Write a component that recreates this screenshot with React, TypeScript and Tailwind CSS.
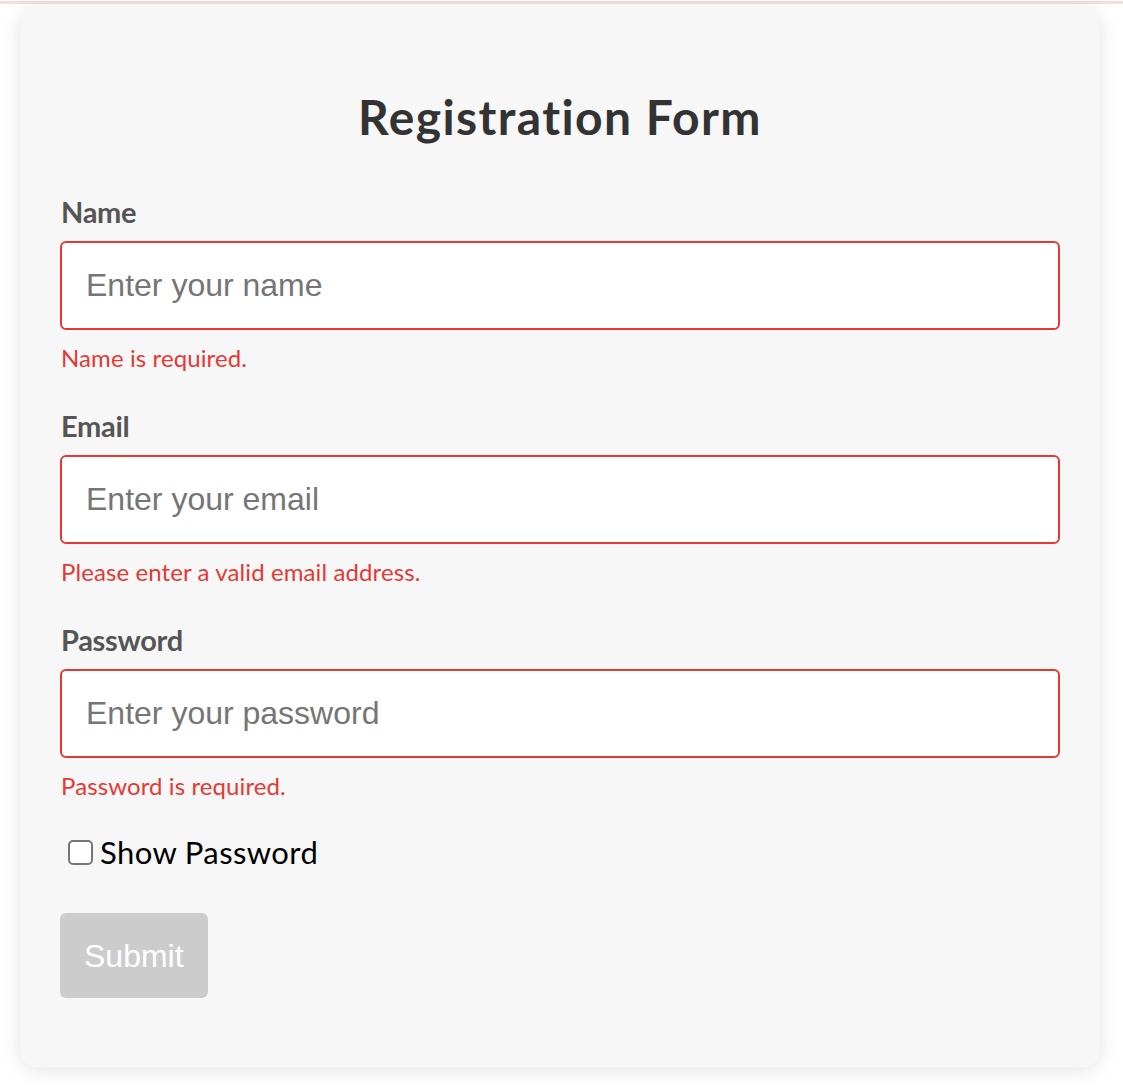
import React from "react";

const seg = { fontFamily: 'Lato, "Noto Sans", sans-serif' } as React.CSSProperties;
const arial = { fontFamily: '"Liberation Sans", Arial, sans-serif' } as React.CSSProperties;

function Field({ label, placeholder, error, type = "text", first = false }: { label: string; placeholder: string; error: string; type?: string; first?: boolean }) {
  return (
    <div className={first ? "" : "mt-[32px]"}>
      <div className="h-[40px] leading-[40px] text-[29px] font-bold tracking-[-0.3px] text-[#555555] pl-px" style={seg}>
        {label}
      </div>
      <input
        type={type}
        placeholder={placeholder}
        className="mt-[9px] block w-full h-[89px] px-[24px] text-[32px] bg-white border-2 border-[#e53935] rounded-[6px] outline-none placeholder:text-[#757575] text-[#333]"
        style={arial}
      />
      <div className="mt-[12px] h-[32px] leading-[32px] text-[24px] tracking-[0.1px] text-[#e53935] pl-px" style={seg}>
        {error}
      </div>
    </div>
  );
}

export default function App() {
  return (
    <div className="min-h-[1086px] bg-white">
      <div className="h-[1px] bg-white" />
      <div className="h-[3px] bg-[#f2dfdf]" />
      <div className="px-[20px] pt-[1px]">
        <div className="w-[1080px] bg-[#f7f7f7] rounded-[16px] shadow-[0_4px_20px_rgba(0,0,0,0.1)] px-[40px] pt-[83px] pb-[69px]">
          <h2 className="h-[58px] leading-[58px] text-center text-[48px] font-bold tracking-[1.4px] [font-variant-ligatures:none] text-[#333333]" style={seg}>
            Registration Form
          </h2>
          <form className="mt-[46px]" onSubmit={(e) => e.preventDefault()}>
            <Field first label="Name" placeholder="Enter your name" error="Name is required." />
            <Field label="Email" placeholder="Enter your email" error="Please enter a valid email address." type="email" />
            <Field label="Password" placeholder="Enter your password" error="Password is required." type="password" />
            <label className="mt-[32px] flex items-center h-[36px]" style={seg}>
              <input
                type="checkbox"
                className="appearance-none ml-[8px] w-[25px] h-[25px] border-2 border-[#767676] rounded-[5px] bg-white"
              />
              <span className="ml-[7px] text-[31px] leading-[36px] tracking-[0.4px] text-black">Show Password</span>
            </label>
            <button
              type="submit"
              disabled
              className="mt-[43px] block h-[85px] px-[24px] bg-[#cccccc] text-white text-[32px] rounded-[6px]"
              style={arial}
            >
              Submit
            </button>
          </form>
        </div>
      </div>
    </div>
  );
}
